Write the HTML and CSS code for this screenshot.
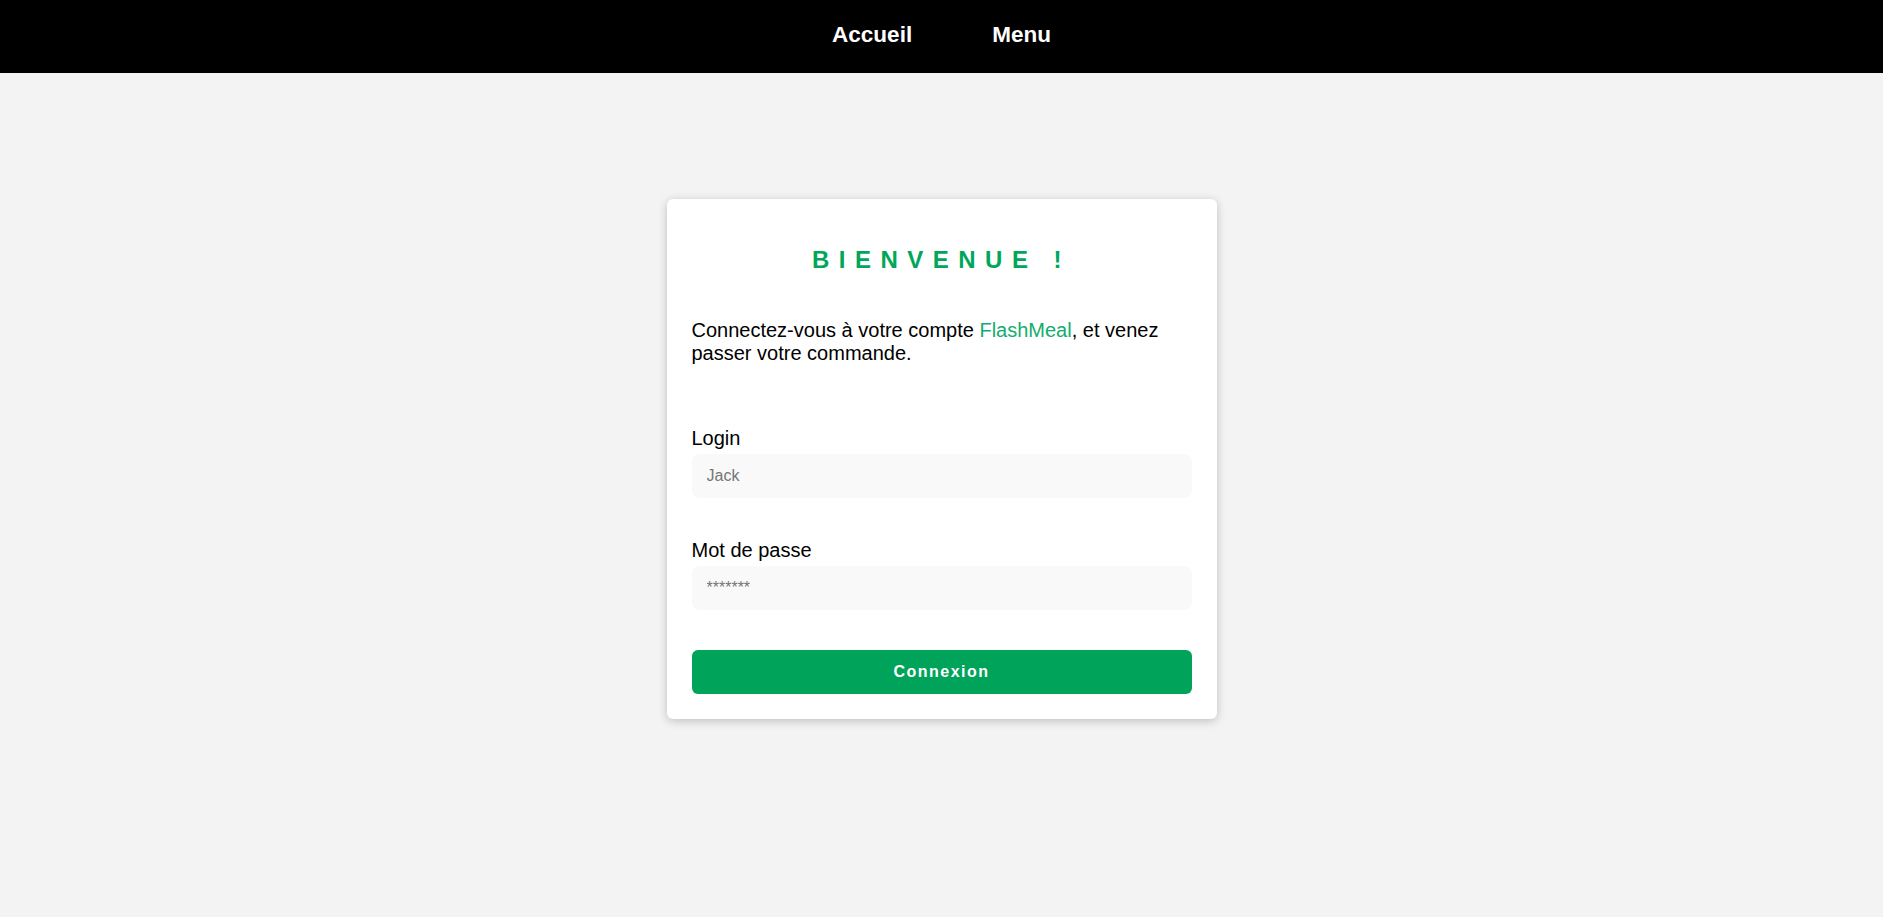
FILE: index.html
```html
<!DOCTYPE html>
<html lang="fr">
<head>
<meta charset="utf-8">
<title>FlashMeal - Connexion</title>
<link rel="stylesheet" href="styles.css">
</head>
<body>
<nav class="topbar">
  <a class="nav-link" href="#">Accueil</a>
  <a class="nav-link" href="#">Menu</a>
</nav>
<main class="page">
  <section class="card">
    <h2 class="card-title">BIENVENUE !</h2>
    <p class="intro">Connectez-vous à votre compte <span class="brand">FlashMeal</span>, et venez passer votre commande.</p>
    <form class="login-form">
      <div class="field field-first">
        <label class="field-label" for="login">Login</label>
        <input class="field-input" id="login" type="text" placeholder="Jack">
      </div>
      <div class="field">
        <label class="field-label" for="pwd">Mot de passe</label>
        <input class="field-input" id="pwd" type="password" placeholder="*******">
      </div>
      <button class="submit" type="button">Connexion</button>
    </form>
  </section>
</main>
</body>
</html>
```
FILE: styles.css
```css
* {
  box-sizing: border-box;
}

html, body {
  margin: 0;
  padding: 0;
}

body {
  background: #f3f3f3;
  font-family: "Liberation Sans", Arial, sans-serif;
  color: #000;
  min-height: 917px;
}

.topbar {
  height: 73px;
  background: #000;
  display: flex;
  justify-content: center;
  align-items: center;
  gap: 80px;
  padding-bottom: 3px;
}

.nav-link {
  color: #fff;
  text-decoration: none;
  font-weight: bold;
  font-size: 22.5px;
}

.page {
  display: flex;
  justify-content: center;
  padding-top: 126px;
}

.card {
  width: 550px;
  background: #fff;
  border-radius: 6px;
  padding: 25px;
  box-shadow: 0 2px 10px rgba(0, 0, 0, 0.22);
}

.card-title {
  margin: 22px 0 0;
  font-size: 24px;
  line-height: 28px;
  font-weight: bold;
  text-align: center;
  letter-spacing: 9.5px;
  color: #00a65a;
}

.intro {
  margin: 45px 0 0;
  font-size: 20px;
  line-height: 23px;
}

.brand {
  color: #12ad6d;
}

.login-form {
  display: flex;
  flex-direction: column;
}

.field {
  display: flex;
  flex-direction: column;
  margin-top: 41px;
}

.field-first {
  margin-top: 62px;
}

.field-label {
  font-size: 20px;
  line-height: 23px;
  margin-bottom: 4px;
}

.field-input {
  height: 44px;
  width: 100%;
  border: none;
  border-radius: 8px;
  background: #f9f9f9;
  padding: 0 15px;
  font-family: "Liberation Sans", Arial, sans-serif;
  font-size: 16px;
  color: #000;
  outline: none;
}

.field-input::placeholder {
  color: #757575;
}

.submit {
  margin-top: 40px;
  height: 44px;
  width: 100%;
  border: none;
  border-radius: 6px;
  background: #00a35a;
  color: #fff;
  font-family: "Liberation Sans", Arial, sans-serif;
  font-size: 16px;
  font-weight: bold;
  letter-spacing: 1.5px;
  cursor: pointer;
}
```
